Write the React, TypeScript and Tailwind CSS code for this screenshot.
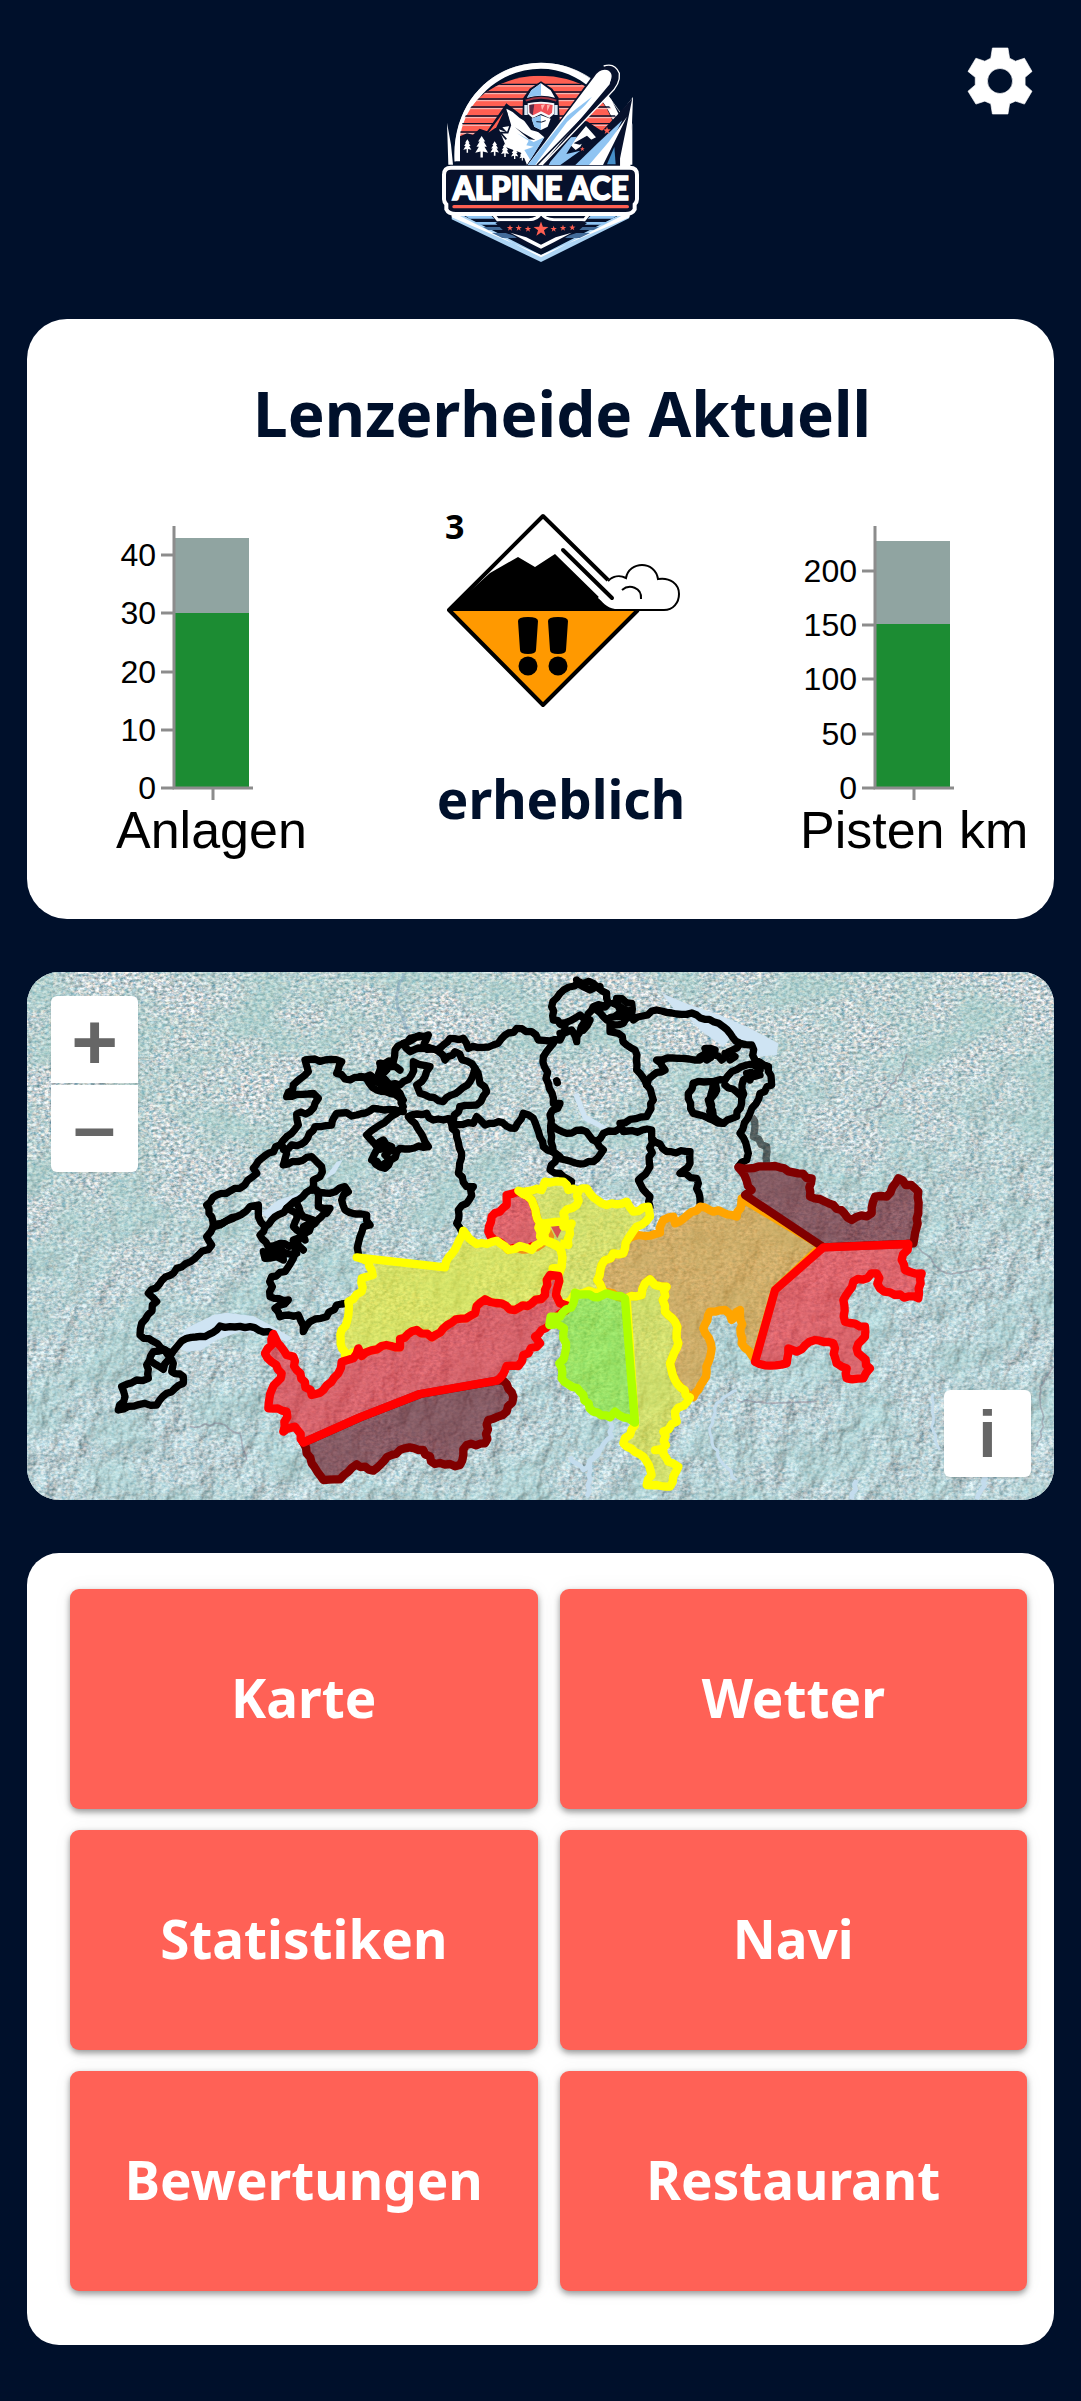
import React from "react";

/* ---------- header logo ---------- */

const STAR = "M0-10 2.4-3.3 9.5-3.1 3.8 1.2 5.9 8.1 0 4 -5.9 8.1 -3.8 1.2 -9.5-3.1 -2.4-3.3Z";
const TREE = "M0-30 9-16 5-16 13-3 7-3 16 12 3 9 3 24H-3V9L-16 12 -7-3 -13-3 -5-16 -9-16Z";

function Logo() {
  const trees = [
    [141, 290, 0.75], [184, 294, 1.2], [223, 298, 0.8], [254, 303, 0.75], [283, 311, 0.68], [306, 318, 0.55],
  ];
  const stars = [[269, 534], [295, 534], [323, 537], [400, 537], [428, 534], [456, 533]];
  return (
    <svg role="img" aria-label="Alpine Ace" viewBox="2 0 720 690" className="w-60">
      <defs>
        <clipPath id="dome"><path d="M119 350V255A242 190 0 0 1 600 240V350Z" /></clipPath>
      </defs>
      <path d="M104 335C98 150 220 40 362 40c75 0 140 30 186 76l52 72" fill="none" stroke="#fff" strokeWidth="2" />
      <path d="M103 334C93 150 225 38 362 38c90 0 170 48 212 112l22 45 42-54-8 210h-40l5-90C570 150 480 56 362 56 240 56 112 150 123 334Z" fill="#fff" />
      <g clipPath="url(#dome)">
        <path d="M118 270C130 150 240 64 362 64s215 90 228 206Z" fill="#ff5f52" />
        <path d="M270 78Q362 50 460 82L440 78Q362 62 284 80Z" fill="#fff" />
        {[103, 126, 147, 171, 198, 221, 246].map((y) => (
          <g key={y}>
            <path d={`M110 ${y}H610`} stroke="#07112c" strokeWidth="4" />
            <path d={`M110 ${y + 5}H610`} stroke="#f6c6c4" strokeWidth="3" />
          </g>
        ))}
        <path d="M110 350V262L140 250 158 254 178 236 200 244 258 160 310 200 500 214 540 240 600 260V350Z" fill="#07112c" />
        <path d="M204 248 250 186 228 232Z" fill="#ff5f52" />
        <path d="M258 176 277 186 298 204 318 216 372 262 320 345 306 310 258 292 236 238 262 248 246 232 270 228Z" fill="#fff" />
        <path d="M258 186 270 226 262 248 240 248 258 268" fill="none" stroke="#07112c" strokeWidth="5" />
        <path d="M290 250 325 272 318 286 340 290 312 300 330 330 372 262 340 276Z" fill="#8fc4f2" />
        <path d="M284 232 310 250 345 270 326 268Z" fill="#07112c" />
      </g>
      {trees.map(([x, y, s]) => (
        <path key={x} d={TREE} fill="#fff" transform={`translate(${x} ${y}) scale(${s})`} />
      ))}
      <path d="M362 94 396 116 414 142 418 205 392 240 362 248 332 240 306 205 308 145 328 116Z" fill="#07112c" />
      <path d="M362 100 391 121 404 143Q362 132 320 143L333 121Z" fill="#fff" />
      <path d="M362 100 333 121 320 143Q340 136 362 138Z" fill="#8fc4f2" />
      <path d="M316 152Q362 134 408 152" fill="none" stroke="#9d3340" strokeWidth="6" />
      <path d="M312 165h10v30h-10zM402 165h10v30h-10z" fill="#dce9f5" />
      <path d="M322 160Q362 150 402 160L401 192 387 204 362 192 337 204 323 192Z" fill="#f7f7fb" />
      <path d="M327 165Q362 157 397 165L395 188 386 196 362 184 338 196 328 188Z" fill="#f04f57" />
      <path d="M327 165 342 163 337 196 328 188Z" fill="#542a46" />
      <path d="m362 165 12-2-9 18zM380 165l9 1-8 18z" fill="#ffb3ae" />
      <path d="M334 206 362 196 391 206 382 230 362 240 342 230Z" fill="#fff" />
      <path d="M334 206 362 196V240L342 230Z" fill="#8fc4f2" />
      <path d="M348 215Q365 219 376 212" fill="none" stroke="#07112c" strokeWidth="3" />
      <path d="M380 345 500 215 540 248 600 185 636 145 595 345Z" fill="#07112c" />
      <path d="M450 285 497 228 527 262 511 270 494 262 480 290 466 300Z" fill="#fff" />
      <path d="M460 280 500 257 514 270 478 284Z" fill="#07112c" />
      <path d="M420 345 480 298 550 258 600 205 540 290 470 345Z" fill="#07112c" />
      <path d="M390 335 452 262 470 260 438 312 480 302 420 345H385Z" fill="#8fc4f2" />
      <path d="M465 345 532 280 606 211 568 285 535 345Z" fill="#8fc4f2" />
      <path d="M506 345 565 276 620 200 548 345Z" fill="#fff" />
      <path d="m560 343 22-52 4 52Z" fill="#468fc9" />
      <path d={STAR} fill="#ff5f52" transform="translate(560 242) scale(1.2)" />
      <path d={STAR} fill="#ff5f52" transform="translate(486 297) scale(.75)" />
      <path d="M320 345 516 78Q540 45 572 48T596 88Q592 112 560 140L370 345Z" fill="#07112c" />
      <path d="M322 345 522 80Q538 55 560 60 583 69 568 98L350 345Z" fill="#fff" />
      <path d="M322 345 440 198 515 140 350 345Z" fill="#8fc4f2" />
      <path d="M355 330 440 216 555 110 572 84 568 103 365 345H345Z" fill="#fff" />
      <path d="M350 345 580 108" stroke="#07112c" strokeWidth="5" />
      <path d="M550 48Q584 37 597 70 601 103 566 135L365 345" fill="none" stroke="#fff" strokeWidth="4" />
      <path d="m80 218 12 66 6 60H84Zm556 0-10 62-6 64h16Z" fill="#fff" />
      <path d="m96 480 266 135 264-135v25L362 636 94 508Z" fill="#acd4f4" />
      <path d="M94 485 362 622 628 485v17L362 615 94 502Z" fill="#fff" />
      <path d="M100 482H624L362 605Z" fill="#07112c" />
      <path d="M128 493H208L222 506H148ZM596 493H516L502 506H576ZM160 516H228L240 524H175ZM564 516H496L484 524H549Z" fill="#8fc4f2" />
      <path d="M188 531H246L258 540H204ZM536 531H478L466 540H520ZM215 549H270L290 564H246ZM509 549H454L434 564H478Z" fill="#426b99" />
      <path d="M214 487 232 509H320Q352 511 362 488 374 511 406 509H492L510 487" fill="none" stroke="#fff" strokeWidth="9" />
      <path d="M225 519 258 550 310 566 362 596 414 566 466 550 500 519 485 514 375 514 362 500 350 514H240Z" fill="#07112c" />
      <path d="M270 548 318 562 362 584 406 562 454 548 402 576 362 596 322 576Z" fill="#fff" />
      {stars.map(([x, y]) => <path key={x} d={STAR} fill="#ff5f52" transform={`translate(${x} ${y})`} />)}
      <path d={STAR} fill="#ff5f52" transform="translate(362 538) scale(2.35)" />
      <path d="M92 353H628Q650 353 650 374V448Q650 456 643 463V478Q636 492 616 492H106Q84 492 78 478V463Q71 456 71 448V374Q71 353 92 353Z" fill="#07112c" stroke="#fff" strokeWidth="12" />
      <rect x="96" y="465" width="530" height="10" rx="5" fill="#ff5f52" />
      <text x="361" y="451" textAnchor="middle" fill="#fff" stroke="#fff" strokeWidth="5" className="font-['Lato'] text-[94px] font-black">ALPINE ACE</text>
    </svg>
  );
}

function GearIcon() {
  return (
    <svg viewBox="80 50 200 206" className="h-[68px]" aria-hidden="true">
      <path
        fillRule="evenodd"
        fill="#fff"
        stroke="#fff"
        strokeWidth="2"
        strokeLinejoin="round"
        d="M157 53H204L209 84 227 93 254 84 277 124 256 142V165L277 184 254 223 227 214 209 222 204 253H157L152 222 134 214 107 223 83 184 105 165V142L83 124 107 84 134 93 152 84ZM180 115a38 38 0 1 0 0 76 38 38 0 1 0 0-76Z"
      />
    </svg>
  );
}

/* ---------- status card ---------- */

type ChartProps = {
  label: string;
  width: number;
  axisX: number;
  ticks: number[];
  max: number;
  open: number;
  total: number;
};

function StackedBar({ label, width, axisX, ticks, max, open, total }: ChartProps) {
  const base = 269;
  const y = (v: number) => Math.round(base - (v / max) * 262);
  return (
    <svg role="img" aria-label={`${label}: ${open} von ${total}`} width={width} height="350" viewBox={`0 0 ${width} 350`} className="shrink-0 overflow-visible font-['Liberation_Sans']">
      <rect x={axisX + 1} y={y(total)} width="74" height={y(open) - y(total)} fill="#90a4a1" />
      <rect x={axisX + 1} y={y(open)} width="74" height={base - y(open)} fill="#1c8c33" />
      <path d={`M${axisX} 7V${base}H${axisX + 79}M${axisX + 39} ${base}v12`} fill="none" stroke="#8c8c8c" strokeWidth="3" />
      {ticks.map((t) => (
        <g key={t}>
          <path d={`M${axisX - 13} ${y(t)}H${axisX}`} stroke="#8c8c8c" strokeWidth="3" />
          <text x={axisX - 18} y={y(t) + 11} textAnchor="end" className="text-[32px]">{t}</text>
        </g>
      ))}
      <text x="0" y="329" className="text-[52px]">{label}</text>
    </svg>
  );
}

function AvalancheIcon() {
  return (
    <svg role="img" aria-label="Lawinengefahr Stufe 3" width="242" height="206" viewBox="440 504 242 206" className="overflow-visible">
      <text x="445" y="540" className="font-['Noto_Sans'] text-[34px] font-bold">3</text>
      <path d="M449 611 543 706 638 611Z" fill="#f90" />
      <path d="M449 611 490 574 518 558 535 568 555 555 605 604 618 611Z" />
      <path d="M608 581 543 517 449 611 543 706 638 611" fill="none" stroke="#000" strokeWidth="4" strokeLinejoin="round" />
      <path d="M608 582C613 577 620 576 626 579 629 562 655 561 658 580 670 578 679 585 679 595 679 604 673 610 664 610H615C606 609 602 602 598 599" fill="#fff" stroke="none" />
      <path d="M608 582C613 577 620 576 626 579 629 562 655 561 658 580 670 578 679 585 679 595 679 604 673 611 664 611H449" fill="none" stroke="#000" strokeWidth="2" />
      <path d="M622 591C629 585 642 588 641 600" fill="none" stroke="#000" strokeWidth="2" />
      <path d="M563 551 612 599" stroke="#000" strokeWidth="4" strokeLinecap="round" />
      {[528, 558].map((x) => (
        <g key={x}>
          <path d={`M${x - 10} 622Q${x - 10} 618 ${x} 618T${x + 10} 622L${x + 8} 651Q${x + 8} 655 ${x} 655T${x - 8} 651Z`} />
          <circle cx={x} cy="667" r="9.5" />
        </g>
      ))}
    </svg>
  );
}

/* ---------- map ---------- */

type Pt = [number, number];

const parse = (s: string): Pt[] => s.trim().split(/\s+/).map((p) => p.split(",").map(Number) as Pt);
const noise = (a: number, b: number) => {
  const v = Math.sin(a * 12.9898 + b * 78.233) * 43758.5453;
  return (v - Math.floor(v)) * 2 - 1;
};

/* Adds natural wiggle to short border segments; long survey lines stay straight. */
function border(s: string, closed = false, dx = 0, dy = 0): string {
  const pts = parse(s).map(([x, y]): Pt => [x + dx, y + dy]);
  if (closed) pts.push(pts[0]);
  const out: Pt[] = [pts[0]];
  for (let i = 1; i < pts.length; i++) {
    let a = pts[i - 1];
    let b = pts[i];
    const flip = a[0] > b[0] || (a[0] === b[0] && a[1] > b[1]);
    if (flip) [a, b] = [b, a];
    const len = Math.hypot(b[0] - a[0], b[1] - a[1]);
    const mid: Pt[] = [];
    if (len > 28 && len < 135) {
      const n = Math.round(len / 15);
      for (let k = 1; k < n; k++) {
        const t = k / n;
        const j = noise(a[0] + k * 7, a[1] + b[0]) * 5;
        mid.push([
          Math.round(a[0] + (b[0] - a[0]) * t - ((b[1] - a[1]) / len) * j),
          Math.round(a[1] + (b[1] - a[1]) * t + ((b[0] - a[0]) / len) * j),
        ]);
      }
    }
    if (flip) mid.reverse();
    out.push(...mid, pts[i]);
  }
  return "M" + out.map((p) => p.join(" ")).join("L") + (closed ? "Z" : "");
}

const CANTONS: { dx: number; dy: number; lines: string[] }[] = [
  {
    dx: 0, dy: 0,
    lines: [
      "580,800 575,770 560,735 590,705 660,685 710,640 700,625 725,595 780,555 800,530 835,495 830,462 870,455 895,415 880,400 800,410 830,365 865,335 855,300 930,298 965,305 950,340 990,360 1050,345 1085,375",
      "790,568 855,545 885,500 935,495 950,460 1010,465 1060,445 1125,450",
      "785,555 800,580 790,615 875,590 905,620 900,650 880,660 875,690",
      "580,800 650,770 690,740 715,735 715,770 735,800 800,745 870,690 930,700 975,680 985,695 965,720 975,750 1040,765 1050,795 1030,800 1020,830 1015,880",
      "890,690 895,740 920,750 885,790 855,820 830,840 850,870",
      "800,745 830,760 820,800 850,830 825,850", "830,730 850,770 880,780 850,800 855,840", "735,800 720,825 745,860 780,850 835,860",
      "905,745 930,745 920,760",
    ],
  },
  {
    dx: 0, dy: 780,
    lines: [
      "640,-5 600,15 580,20 560,50 575,75 535,105 470,145 385,220 410,245 365,310 360,345 435,390 455,400",
      "850,40 820,60 825,100 795,155 755,170 750,230 805,240 765,265 780,290 835,285 850,335 870,305 920,290 950,255 980,250",
      "730,95 735,115 770,110 790,120 780,80 740,95 830,100",
      "455,400 500,355 555,350 600,318 690,320 760,342",
      "435,390 400,395 380,435 385,475 350,480 305,500 315,530 295,570 375,550 410,555 440,520 490,490 490,470 455,455 460,430 440,400",
      "395,425 430,448 445,420",
    ],
  },
  {
    dx: 1020, dy: 0,
    lines: [
      "0,350 60,370 60,310 100,305 105,270 150,235 205,225 190,260 230,270 270,235 310,235 325,265 400,255 470,205 515,215 535,240 600,240 615,195 580,180 575,140 600,100 655,65 700,70 740,100 745,130 700,140 680,175 660,215 650,245 635,210 600,220",
      "600,190 660,165 690,180 670,210", "650,60 670,80 690,90 720,80",
      "745,130 710,150 740,180 780,170 770,115 815,130 820,180 890,150 1010,165 1060,185 1090,200 1140,250 1175,255 1185,300 1225,320 1235,375 1200,400 1170,460 1140,520 1165,580 1160,600 1135,620",
      "760,130 800,150 770,165 810,170 790,190 750,190 750,215 775,220 800,255 825,270 830,330 860,375 880,420 860,470 780,490 790,515 875,510 875,535 920,575 990,575 990,610 960,640 1010,655 1020,730",
      "860,375 880,345 915,330 890,300 970,295 1020,300 1050,270 1085,300 1140,250",
      "1020,290 1050,285 1035,265 1065,270 1040,300", "1095,280 1125,290 1110,300",
      "1000,370 1095,360 1115,335 1160,315 1225,320", "1065,365 1070,390 1045,420 1060,470 1090,490 1130,470 1145,430 1150,360 1200,345 1160,340 1170,360 1200,330",
      "1095,375 1140,405", "1000,370 985,400 1000,460 1090,490", "1060,370 1050,420 1055,470",
      "580,250 550,290 565,370 580,430 600,430 570,465 575,530 580,575 600,590",
      "590,362 592,368", "575,495 620,520 665,510 710,545 730,520 780,505",
      "710,545 730,570 700,605 660,612 590,590 570,630 600,640 635,665 630,685",
      "875,535 870,620 835,660 870,710 870,740",
      "275,490 340,490 350,470 375,495 415,485 465,505 490,460 520,475 550,560 590,585",
      "270,480 290,530 305,580 295,640 320,680 340,680 320,730 295,750 290,790 305,815",
      "300,440 280,480 220,480 200,460 145,470 180,515 205,560 120,565 75,625 35,600 50,570 95,560 70,540 50,560 20,525 60,495 130,440 120,400 60,370",
      "95,450 130,455 105,450", "40,600 60,620 90,600 75,585 100,570",
      "5,350 50,390 90,400 130,420 100,380 60,350 80,330 60,310 120,330",
      "60,370 120,375 155,345 160,305 210,320 195,350 170,375 180,400 250,425 330,365 345,325 285,275 255,300 230,270 190,265 150,275 130,250 185,230",
      "345,325 360,370 380,395 350,435 300,440",
    ],
  },
];

const WALLIS_NORTH =
  "1025,1188 1085,1158 1140,1162 1140,1137 1190,1110 1235,1132 1295,1088 1365,1060 1370,1038 1395,1018 1445,1030 1485,1050 1535,1030 1575,1005 1580,960";

const REGIONS: { color: string; fill: string; d: string }[] = [
  {
    color: "#ffa500", fill: "#dc9829",
    d: "1855,825 1875,828 1920,818 1930,780 1960,770 1965,790 2040,740 2150,770 2165,715 2405,858 2265,990 2205,1200 2165,1150 2160,1050 2135,1080 2115,1050 2070,1055 2050,1105 2075,1165 2060,1235 2020,1312 1965,1260 1950,1210 1975,1150 1965,1085 1935,1055 1928,1020 1940,980 1905,975 1890,958 1875,970 1865,1005 1820,1015 1750,995 1732,960 1745,915 1780,880 1810,880 1825,835",
  },
  {
    color: "#ff0000", fill: "#f0232d",
    d: "1495,695 1460,705 1460,735 1415,770 1405,815 1425,840 1465,870 1550,862 1590,830 1560,790 1535,720",
  },
  {
    color: "#ffff00", fill: "#e8ec25",
    d: "1010,892 1275,922 1330,812 1370,852 1430,842 1465,870 1500,858 1535,870 1568,842 1620,865 1625,920 1598,925 1598,945 1580,960 1575,1005 1535,1030 1485,1050 1445,1030 1395,1018 1370,1038 1365,1060 1295,1088 1235,1132 1190,1110 1140,1137 1140,1162 1085,1158 1025,1188 1015,1168 975,1190 962,1152 965,1110 982,1080 985,1025 1025,995 1025,955 1058,945 1045,905",
  },
  {
    color: "#ffff00", fill: "#e0e62f",
    d: "1495,692 1565,690 1575,665 1630,665 1645,690 1700,685 1720,712 1760,735 1820,725 1840,755 1885,740 1890,770 1850,800 1825,835 1810,880 1780,880 1745,915 1732,960 1750,995 1665,998 1640,1030 1620,1030 1608,1005 1615,948 1625,920 1620,865 1590,845 1560,830 1560,790 1535,720",
  },
  {
    color: "#ffff00", fill: "#dfe52f",
    d: "1820,1015 1865,1005 1875,970 1890,958 1905,975 1940,980 1928,1020 1935,1055 1965,1085 1975,1150 1950,1210 1965,1260 2010,1312 1965,1355 1970,1385 1930,1415 1938,1455 1905,1470 1930,1470 1945,1505 1975,1520 1950,1580 1910,1575 1880,1575 1895,1545 1870,1490 1810,1450 1845,1395",
  },
  {
    color: "#800000", fill: "#6b1420",
    d: "850,1448 875,1510 910,1560 960,1558 1010,1513 1060,1532 1115,1485 1155,1465 1210,1470 1245,1512 1320,1515 1340,1455 1395,1450 1405,1380 1460,1355 1480,1310 1450,1262 1430,1262 1200,1302 1020,1372",
  },
  {
    color: "#ff0000", fill: "#e8202c",
    d: "760,1122 800,1185 820,1190 830,1230 875,1305 910,1290 955,1240 965,1205 1000,1195 1015,1165 " +
      WALLIS_NORTH +
      " 1590,945 1615,948 1608,1005 1620,1030 1645,1038 1588,1095 1545,1130 1560,1150 1510,1185 1495,1218 1460,1218 1430,1262 1200,1302 1020,1372 850,1448 825,1400 790,1415 800,1355 745,1345 755,1290 785,1240 735,1180 755,1155",
  },
  {
    color: "#adff00", fill: "#86ec24",
    d: "1588,1095 1592,1070 1620,1070 1660,1030 1665,998 1735,1012 1760,1000 1815,1015 1830,1210 1845,1388 1825,1375 1785,1355 1770,1372 1720,1355 1680,1295 1625,1255 1618,1210 1635,1180 1632,1105 1612,1092",
  },
  {
    color: "#800000", fill: "#6b1420",
    d: "2155,622 2265,618 2375,655 2370,710 2440,735 2495,780 2555,760 2565,710 2600,710 2635,655 2695,695 2695,760 2680,850 2660,852 2410,862 2175,705 2195,690",
  },
  {
    color: "#ff0000", fill: "#f0232d",
    d: "2410,862 2665,852 2645,900 2655,930 2705,940 2695,1015 2625,1005 2580,985 2570,940 2500,965 2470,1020 2475,1085 2535,1100 2535,1130 2510,1165 2550,1225 2530,1255 2480,1255 2480,1225 2450,1210 2440,1150 2385,1140 2330,1175 2305,1165 2300,1210 2250,1217 2205,1205 2265,990",
  },
];

function TerrainMap() {
  return (
    <svg role="img" aria-label="Lawinenkarte der Schweiz" viewBox="21 36 3081 1584" preserveAspectRatio="xMidYMid slice" className="block h-[528px] w-full">
      <defs>
        <filter id="grain" x="0" y="0" width="100%" height="100%" colorInterpolationFilters="sRGB">
          <feTurbulence type="fractalNoise" baseFrequency="0.08 0.12" numOctaves="3" seed="4" />
          <feColorMatrix values="1.1 .25 0 0 .1  .75 0 .15 0 .37  .6 0 .3 0 .38  0 0 0 0 1" />
        </filter>
        <filter id="forest" x="0" y="0" width="100%" height="100%" colorInterpolationFilters="sRGB">
          <feTurbulence type="fractalNoise" baseFrequency="0.005 0.007" numOctaves="5" seed="11" />
          <feColorMatrix values="0 0 0 0 .6  0 0 0 0 .8  0 0 0 0 .77  2.8 0 0 0 -1" />
        </filter>
        <filter id="relief" x="0" y="0" width="100%" height="100%" colorInterpolationFilters="sRGB">
          <feTurbulence type="fractalNoise" baseFrequency="0.016 0.011" numOctaves="4" seed="7" />
          <feColorMatrix values="0 0 0 0 0  0 0 0 0 0  0 0 0 0 0  1 0 0 0 0" />
          <feDiffuseLighting surfaceScale="16" diffuseConstant="1.1" lightingColor="#bfe2ea">
            <feDistantLight azimuth="225" elevation="58" />
          </feDiffuseLighting>
        </filter>
        <linearGradient id="south" x1="0.1" y1="0" x2="0.35" y2="1">
          <stop offset=".25" stopColor="#fff" stopOpacity="0.08" />
          <stop offset=".8" stopColor="#fff" stopOpacity=".45" />
        </linearGradient>
        <mask id="alps"><rect x="21" y="36" width="3081" height="1584" fill="url(#south)" /></mask>
      </defs>
      <rect x="21" y="36" width="3081" height="1584" filter="url(#grain)" />
      <rect x="21" y="36" width="3081" height="1584" filter="url(#forest)" opacity=".5" />
      <g mask="url(#alps)"><rect x="21" y="36" width="3081" height="1584" filter="url(#relief)" /></g>

      <g fill="#cfe4f3">
        <path d="M460 1160 500 1105 580 1065 620 1058 700 1068 760 1100 818 1135 800 1145 740 1122 660 1115 590 1140 545 1170 500 1175Z" />
        <path d="M1925 100 2010 135 2100 165 2180 200 2275 250 2270 285 2215 290 2190 260 2130 235 2110 260 2040 210 2000 165 1880 150 1890 140 1960 145Z" />
        <path d="M725 760 775 720 865 690 870 700 800 750 760 790Z" />
        <path d="M1660 405 1675 400 1700 465 1760 500 1750 510 1690 480Z" />
        <path d="M910 660 950 605 968 600 945 640Z" />
      </g>
      <g fill="none" stroke="#c3dced" strokeWidth="14" strokeLinejoin="round">
        <path d={border("1770,1372 1775,1430 1710,1500 1710,1560 1700,1610")} />
        <path d={border("1650,1490 1690,1530 1740,1470")} />
        <path d={border("2150,1290 2090,1330 2070,1420 2100,1500 2150,1560")} strokeWidth="9" />
        <path d={border("2740,1300 2735,1400 2760,1470")} strokeWidth="8" />
        <path d={border("2510,1560 2495,1618")} />
        <path d={border("2900,1550 2870,1618")} />
      </g>
      <g fill="none" stroke="#86798b" strokeOpacity=".45" strokeWidth="5">
        <path d={border("2390,1325 2240,1330 2150,1320")} />
        <path d={border("2660,280 2650,330 2600,400 2580,440 2520,450")} />
        <path d={border("2910,925 2780,940 2740,910 2690,850")} />
        <path d={border("1150,40 1130,110 1140,160 1170,220")} stroke="#7396b3" strokeWidth="9" />
        <path d={border("510,1400 600,1390 660,1420 680,1500")} />
        <path d={border("3100,1220 3060,1280 3070,1400 3050,1460")} />
      </g>

      <path d={border("2195,470 2205,500 2200,530 2240,560 2240,610")} fill="none" stroke="#000" strokeOpacity=".55" strokeWidth="22" strokeLinejoin="round" />
      <g fill="none" stroke="#000" strokeWidth="22" strokeLinejoin="round" strokeLinecap="round">
        {CANTONS.map((g) => g.lines.map((l) => <path key={l} d={border(l, false, g.dx, g.dy)} />))}
      </g>
      <g strokeWidth="25" strokeLinejoin="round">
        {REGIONS.map((r) => (
          <path key={r.d} d={border(r.d, true)} fill={r.fill} fillOpacity=".62" stroke={r.color} />
        ))}
      </g>
      <path d="M1592 798 1630 798 1612 835Z" fill="#d75050" />
      <g fill="none" stroke="#ffff00" strokeWidth="25" strokeLinejoin="round">
        <path d={border("1675,695 1670,735 1630,760 1630,800 1655,790 1645,855 1620,850")} />
        <path d={border("1560,790 1620,785 1655,795")} />
        <path d={border("1575,780 1575,850")} />
      </g>
    </svg>
  );
}

const mapButton =
  "flex h-[87px] w-[87px] items-center justify-center bg-white font-['Liberation_Sans'] font-bold leading-none text-[#666] shadow-sm";

/* ---------- page ---------- */

const MENU = ["Karte", "Wetter", "Statistiken", "Navi", "Bewertungen", "Restaurant"];

export default function App() {
  return (
    <div className="min-h-screen bg-[#00102b] px-[27px] pb-14 font-['Noto_Sans',sans-serif] text-[#00102b]">
      <header className="grid grid-cols-[1fr_auto_1fr] items-start pt-[50px] pb-[39px]">
        <span />
        <Logo />
        <button type="button" aria-label="Einstellungen" className="-mt-[3px] mr-[21px] justify-self-end">
          <GearIcon />
        </button>
      </header>

      <main className="flex flex-col gap-[53px]">
        <section className="rounded-[40px] bg-white pt-[54px] pb-[50px]">
          <h1 className="pl-[43px] text-center text-[62px] leading-[80px] font-bold">Lenzerheide Aktuell</h1>
          <div className="flex justify-between pt-[66px] pr-[26px] pl-[89px]">
            <StackedBar label="Anlagen" width={206} axisX={58} ticks={[0, 10, 20, 30, 40]} max={45} open={30} total={43} />
            <div className="-mt-4 flex flex-col items-center gap-[54px]">
              <AvalancheIcon />
              <p className="text-[53px] leading-[72px] font-bold">erheblich</p>
            </div>
            <StackedBar label="Pisten km" width={228} axisX={75} ticks={[0, 50, 100, 150, 200]} max={241} open={151} total={227} />
          </div>
        </section>

        <section className="relative overflow-hidden rounded-[32px] bg-[#c4d8d7]">
          <TerrainMap />
          <div className="absolute top-6 left-6 flex flex-col gap-0.5">
            <button type="button" aria-label="Vergrössern" className={`${mapButton} rounded-t-md pt-1 text-[80px]`}>+</button>
            <button type="button" aria-label="Verkleinern" className={`${mapButton} rounded-b-md pb-1 text-[76px]`}>–</button>
          </div>
          <button type="button" aria-label="Kartenquelle" className={`${mapButton} absolute right-[23px] bottom-[23px] rounded-md text-[66px]`}>i</button>
        </section>

        <nav className="grid grid-cols-2 gap-x-[22px] gap-y-[21px] rounded-[32px] bg-white pt-9 pr-[27px] pb-[54px] pl-[43px]">
          {MENU.map((m) => (
            <button
              key={m}
              type="button"
              className="h-[220px] rounded-[9px] bg-[#ff6156] pb-0.5 text-[53px] font-bold text-white shadow-[0_3px_6px_rgba(0,0,0,0.4),0_0_20px_rgba(0,0,0,0.05)]"
            >
              {m}
            </button>
          ))}
        </nav>
      </main>
    </div>
  );
}
